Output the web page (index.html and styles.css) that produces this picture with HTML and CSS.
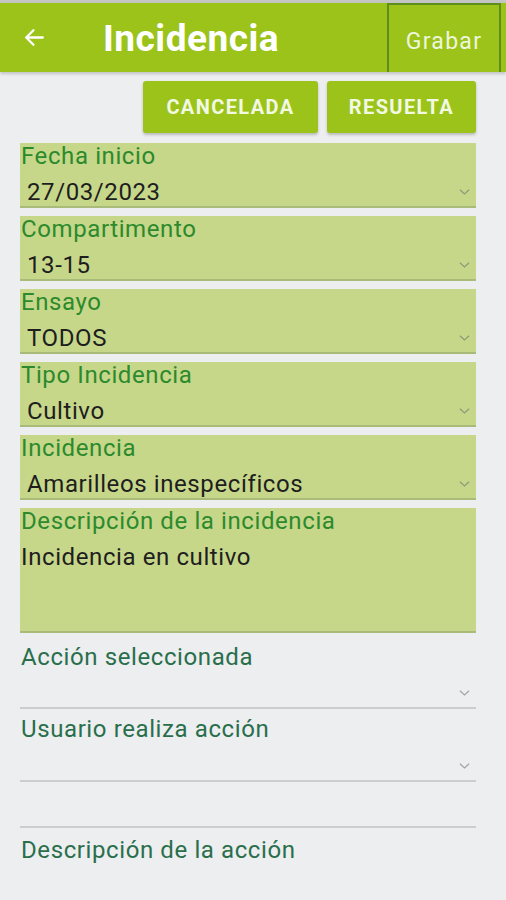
FILE: index.html
```html
<!DOCTYPE html>
<html lang="es">
<head>
<meta charset="utf-8">
<link rel="stylesheet" href="styles.css">
</head>
<body>
<div class="status"></div>
<header class="appbar">
  <svg class="back" width="24" height="24" viewBox="0 0 24 24"><path d="M20 12H5M11 5l-7 7 7 7" fill="none" stroke="#fff" stroke-width="2.2" stroke-linecap="round" stroke-linejoin="round"/></svg>
  <h1 class="title">Incidencia</h1>
  <div class="save">Grabar</div>
</header>
<div class="actions">
  <button class="btn btn-cancel">CANCELADA</button>
  <button class="btn btn-solve">RESUELTA</button>
</div>
<main class="form">
  <div class="field">
    <div class="label">Fecha inicio</div>
    <div class="value"><span>27/03/2023</span><svg class="chev" viewBox="0 0 12 8"><path d="M1 1.5l5 4.5 5-4.5" fill="none" stroke="#8f9a7a" stroke-width="1.3"/></svg></div>
  </div>
  <div class="field">
    <div class="label">Compartimento</div>
    <div class="value"><span>13-15</span><svg class="chev" viewBox="0 0 12 8"><path d="M1 1.5l5 4.5 5-4.5" fill="none" stroke="#8f9a7a" stroke-width="1.3"/></svg></div>
  </div>
  <div class="field">
    <div class="label">Ensayo</div>
    <div class="value"><span>TODOS</span><svg class="chev" viewBox="0 0 12 8"><path d="M1 1.5l5 4.5 5-4.5" fill="none" stroke="#8f9a7a" stroke-width="1.3"/></svg></div>
  </div>
  <div class="field">
    <div class="label">Tipo Incidencia</div>
    <div class="value"><span>Cultivo</span><svg class="chev" viewBox="0 0 12 8"><path d="M1 1.5l5 4.5 5-4.5" fill="none" stroke="#8f9a7a" stroke-width="1.3"/></svg></div>
  </div>
  <div class="field">
    <div class="label">Incidencia</div>
    <div class="value"><span>Amarilleos inespecíficos</span><svg class="chev" viewBox="0 0 12 8"><path d="M1 1.5l5 4.5 5-4.5" fill="none" stroke="#8f9a7a" stroke-width="1.3"/></svg></div>
  </div>
  <div class="field field-area">
    <div class="label">Descripción de la incidencia</div>
    <div class="area-text">Incidencia en cultivo</div>
  </div>

  <div class="plain plain-first">
    <div class="plain-label">Acción seleccionada</div>
    <div class="plain-value"><svg class="chev" viewBox="0 0 12 8"><path d="M1 1.5l5 4.5 5-4.5" fill="none" stroke="#a0a4a8" stroke-width="1.3"/></svg></div>
  </div>
  <div class="plain plain-second">
    <div class="plain-label">Usuario realiza acción</div>
    <div class="plain-value"><svg class="chev" viewBox="0 0 12 8"><path d="M1 1.5l5 4.5 5-4.5" fill="none" stroke="#a0a4a8" stroke-width="1.3"/></svg></div>
  </div>
  <div class="plain-empty"></div>
  <div class="plain-label plain-last">Descripción de la acción</div>
</main>
</body>
</html>
```
FILE: styles.css
```css
* { box-sizing: border-box; }
html, body { margin: 0; padding: 0; }
body {
  background: #eceef0;
  font-family: Roboto, "Noto Sans", "Liberation Sans", sans-serif;
  width: 506px;
  height: 900px;
  overflow: hidden;
}
.status { height: 3px; background: #c4c6c4; }
.appbar {
  height: 69px;
  background: #9cc31a;
  display: flex;
  align-items: center;
  box-shadow: 0 2px 3px rgba(0,0,0,0.18);
  position: relative;
  z-index: 1;
}
.back { margin-left: 22px; width: 25px; height: 25px; flex: none; }
.title {
  margin: 2px 0 0 56px;
  color: #ffffff;
  font-size: 37px;
  font-weight: 700;
  letter-spacing: 0.5px;
}
.save {
  margin-left: auto;
  margin-right: 5px;
  align-self: stretch;
  width: 114px;
  border: 2px solid #5e8e1c;
  border-bottom: none;
  color: #eef6dc;
  font-size: 23px;
  letter-spacing: 1.3px;
  display: flex;
  align-items: center;
  justify-content: center;
  padding-top: 6px;
}
.actions {
  display: flex;
  justify-content: flex-end;
  gap: 9px;
  padding-right: 30px;
  margin-top: 9px;
}
.btn {
  height: 52px;
  border: none;
  border-radius: 3px;
  background: #9cc31a;
  color: #f2f9e2;
  font-family: Roboto, "Liberation Sans", sans-serif;
  font-weight: 700;
  font-size: 20px;
  letter-spacing: 1.4px;
  box-shadow: 0 2px 3px rgba(0,0,0,0.22);
  padding: 0;
}
.btn-cancel { width: 175px; }
.btn-solve { width: 149px; }
.form {
  margin-top: 10px;
  padding: 0 30px 0 20px;
  display: flex;
  flex-direction: column;
  gap: 8px;
}
.field {
  background: #c6d78a;
  border-bottom: 2px solid #a9bb78;
  height: 65px;
}
.label {
  color: #2c8a2c;
  font-size: 24px;
  letter-spacing: 0.6px;
  line-height: 27px;
  padding-left: 1px;
}
.value {
  display: flex;
  align-items: center;
  justify-content: space-between;
  padding: 8px 6px 0 7px;
  font-size: 24px;
  letter-spacing: 0.6px;
  line-height: 28px;
  color: #1e1e1e;
}
.chev { width: 11px; height: 8px; flex: none; }
.field-area { height: 125px; }
.area-text {
  color: #1e1e1e;
  font-size: 24px;
  letter-spacing: 0.6px;
  line-height: 28px;
  padding: 8px 0 0 1px;
}
.plain {
  height: 73px;
  border-bottom: 2px solid #cbcdcf;
  display: flex;
  flex-direction: column;
  margin-top: -8px;
}
.form .plain-first { height: 68px; margin-top: 0; }
.plain-label {
  color: #2a6e4c;
  font-size: 24px;
  letter-spacing: 0.6px;
  line-height: 28px;
  padding-left: 1px;
  margin-top: 2px;
}
.plain-second .plain-label { margin-top: 6px; }
.plain-value {
  flex: 1;
  display: flex;
  align-items: center;
  justify-content: flex-end;
  padding-right: 6px;
  padding-top: 8px;
}
.plain-empty {
  height: 46px;
  border-bottom: 2px solid #cbcdcf;
  margin-top: -8px;
}
.plain-last { margin-top: 0; }
```
